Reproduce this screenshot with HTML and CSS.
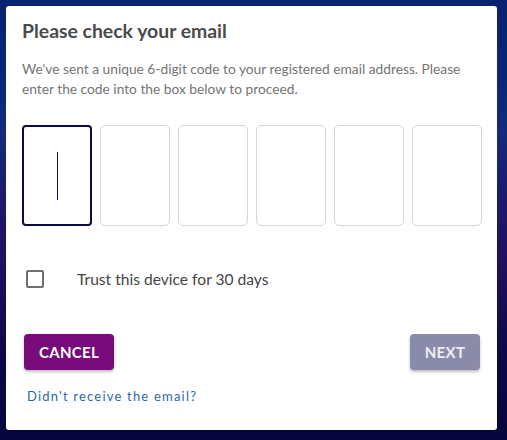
FILE: index.html
```html
<!DOCTYPE html>
<html>
<head>
<meta charset="utf-8">
<link rel="stylesheet" href="styles.css">
</head>
<body>
<div class="page">
  <div class="card">
    <h1 class="title">Please check your email</h1>
    <p class="desc">We've sent a unique 6-digit code to your registered email address. Please enter the code into the box below to proceed.</p>
    <div class="codes">
      <div class="box active"><span class="caret"></span></div>
      <div class="box"></div>
      <div class="box"></div>
      <div class="box"></div>
      <div class="box"></div>
      <div class="box"></div>
    </div>
    <label class="trust">
      <span class="check"></span>
      <span class="trust-text">Trust this device for 30 days</span>
    </label>
    <div class="actions">
      <button class="btn cancel">CANCEL</button>
      <button class="btn next">NEXT</button>
    </div>
    <a class="resend" href="#">Didn't receive the email?</a>
  </div>
</div>
</body>
</html>
```
FILE: styles.css
```css
html, body {
  margin: 0;
  padding: 0;
}
body {
  width: 507px;
  height: 440px;
  overflow: hidden;
  font-family: Lato, "Open Sans", sans-serif;
  background: linear-gradient(180deg, #0a2170 0%, #0c2676 18%, #142a7a 30%, #1c1a6c 45%, #210f5c 60%, #0e0848 80%, #07053c 100%);
}
.page {
  padding: 6px 10px 10px 6px;
}
.card {
  background: #fff;
  border-radius: 3px;
  height: 424px;
  box-sizing: border-box;
  padding: 13px 15px 0 16px;
  display: flex;
  flex-direction: column;
}
.title {
  margin: 0;
  font-size: 19.4px;
  font-weight: 700;
  color: #4a4a4a;
  line-height: 24px;
}
.desc {
  margin: 16px 0 0 0;
  font-size: 13.75px;
  line-height: 20px;
  color: #757575;
  padding-right: 8px;
}
.codes {
  display: flex;
  gap: 8px;
  margin-top: 26px;
}
.box {
  flex: none;
  width: 70px;
  height: 101px;
  box-sizing: border-box;
  border: 1px solid #d6d6d6;
  border-radius: 5px;
  display: flex;
  align-items: center;
  justify-content: center;
}
.box.active {
  border: 2px solid #0a0a4a;
  border-radius: 4px;
}
.caret {
  width: 1px;
  height: 48px;
  background: #0a0a4a;
}
.trust {
  display: flex;
  align-items: center;
  margin-top: 44px;
  padding-left: 4px;
}
.check {
  width: 18px;
  height: 18px;
  box-sizing: border-box;
  border: 2px solid #6f6f6f;
  border-radius: 2px;
}
.trust-text {
  margin-left: 33px;
  font-size: 15.6px;
  color: #454545;
}
.actions {
  display: flex;
  justify-content: space-between;
  margin-top: 46px;
  padding: 0 2px;
}
.btn {
  height: 36px;
  border: none;
  border-radius: 4px;
  color: #fff;
  font-family: Lato, sans-serif;
  font-weight: 700;
  font-size: 15px;
  letter-spacing: 0.3px;
  box-shadow: 0 2px 3px rgba(0,0,0,0.25);
}
.cancel {
  width: 90px;
  background: #790a79;
}
.next {
  width: 70px;
  background: #8a8aa9;
  color: #eeeef4;
}
.resend {
  margin-top: 18px;
  padding-left: 5px;
  font-size: 13px;
  letter-spacing: 1.2px;
  color: #2a6aa8;
  text-decoration: none;
}
```
